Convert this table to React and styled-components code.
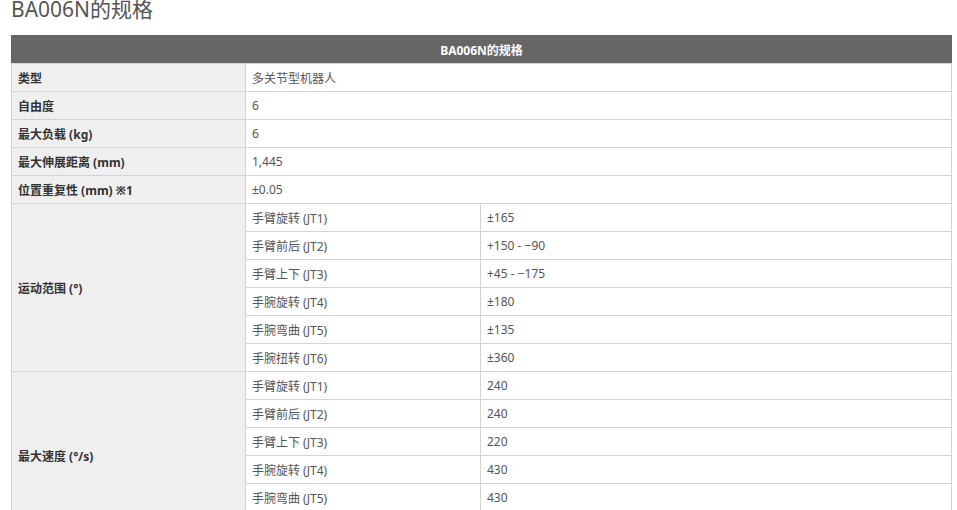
import React from "react";
import styled, { createGlobalStyle } from "styled-components";

const Global = createGlobalStyle`
  html, body { margin: 0; padding: 0; background: #fff; overflow: hidden; }
  body { font-family: "Noto Sans", "Noto Sans CJK SC", sans-serif; }
`;

const Page = styled.div`
  padding: 0 0 0 11px;
  width: 940px;
`;

const Title = styled.h2`
  margin: -4px 0 0;
  height: 39px;
  font-size: 21px;
  line-height: 26px;
  font-weight: 400;
  color: #555;
`;

const Table = styled.table`
  width: 940px;
  table-layout: fixed;
  border-collapse: collapse;
  font-size: 12px;
`;

const HeadCell = styled.th`
  background: #666;
  color: #fff;
  font-weight: 700;
  height: 27px;
  padding: 0;
  border: 1px solid #666;
  border-bottom: 1px solid #d6d6d6;
  text-align: center;
`;

const Row = styled.tr`
  height: 28px;
`;

const Label = styled.td`
  background: #efefef;
  color: #333;
  font-weight: 700;
  padding: 0 6px;
  border: 1px solid #d3d3d3;
  text-align: left;
  vertical-align: middle;
`;

const Value = styled.td`
  background: #fff;
  color: #555;
  padding: 0 6px;
  border: 1px solid #d3d3d3;
  vertical-align: middle;
  white-space: nowrap;
`;

const simple = [
  ["类型", "多关节型机器人"],
  ["自由度", "6"],
  ["最大负载 (kg)", "6"],
  ["最大伸展距离 (mm)", "1,445"],
  ["位置重复性 (mm) ※1", "±0.05"],
];

const groups = [
  {
    label: "运动范围 (°)",
    rows: [
      ["手臂旋转 (JT1)", "±165"],
      ["手臂前后 (JT2)", "+150 - −90"],
      ["手臂上下 (JT3)", "+45 - −175"],
      ["手腕旋转 (JT4)", "±180"],
      ["手腕弯曲 (JT5)", "±135"],
      ["手腕扭转 (JT6)", "±360"],
    ],
  },
  {
    label: "最大速度 (°/s)",
    rows: [
      ["手臂旋转 (JT1)", "240"],
      ["手臂前后 (JT2)", "240"],
      ["手臂上下 (JT3)", "220"],
      ["手腕旋转 (JT4)", "430"],
      ["手腕弯曲 (JT5)", "430"],
      ["手腕扭转 (JT6)", "650"],
    ],
  },
];

export default function App() {
  return (
    <Page>
      <Global />
      <Title>BA006N的规格</Title>
      <Table>
        <colgroup>
          <col style={{ width: 234 }} />
          <col style={{ width: 235 }} />
          <col style={{ width: 471 }} />
        </colgroup>
        <thead>
          <tr>
            <HeadCell colSpan={3}>BA006N的规格</HeadCell>
          </tr>
        </thead>
        <tbody>
          {simple.map(([l, v]) => (
            <Row key={l}>
              <Label>{l}</Label>
              <Value colSpan={2}>{v}</Value>
            </Row>
          ))}
          {groups.map((g) =>
            g.rows.map(([n, v], i) => (
              <Row key={g.label + n}>
                {i === 0 && <Label rowSpan={g.rows.length}>{g.label}</Label>}
                <Value>{n}</Value>
                <Value>{v}</Value>
              </Row>
            ))
          )}
        </tbody>
      </Table>
    </Page>
  );
}
